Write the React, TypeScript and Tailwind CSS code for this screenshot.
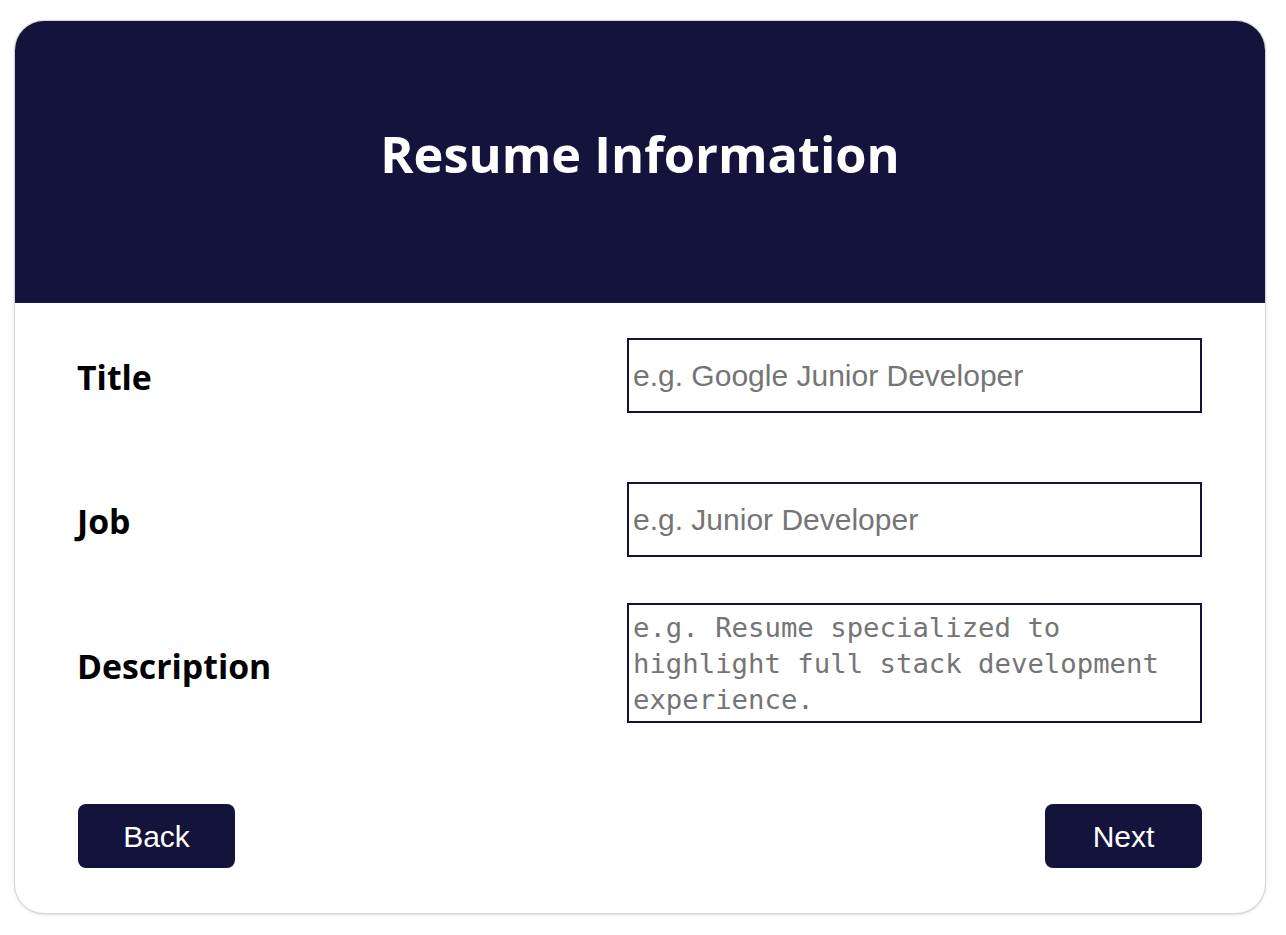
import React, { useState } from "react";

const ResumeInfo = () => {
  const [title, setTitle] = useState<string>("");
  const [job, setJob] = useState<string>("");
  const [description, setDescription] = useState<string>("");

  return (
    <div className="w-full min-h-[935px] bg-white pt-[20px] pl-[14px]">
      <div className="w-[1252px] h-[894px] rounded-[30px] overflow-hidden border border-gray-300 shadow-sm bg-white flex flex-col">
        {/* header */}
        <div className="h-[282px] shrink-0 bg-[#14133b] flex items-center justify-center pb-[16px]">
          <h1 className="text-white font-bold text-[50.5px] font-['Open_Sans',sans-serif]">
            Resume Information
          </h1>
        </div>

        <div className="flex-1 px-[63px] pt-[35px] flex flex-col">
          <div className="flex items-center justify-between h-[75px]">
            <label className="text-[33.8px] font-bold text-black font-['Open_Sans',sans-serif] pt-[4px] -ml-[1px]">
              Title
            </label>
            <input
              type="text"
              value={title}
              onChange={(e) => setTitle(e.target.value)}
              placeholder="e.g. Google Junior Developer"
              className="w-[575px] h-[75px] border-2 border-[#14133b] px-[4px] text-[30px] font-['Liberation_Sans',Arial,sans-serif] placeholder:text-[#757575] outline-none"
            />
          </div>

          <div className="flex items-center justify-between h-[75px] mt-[69px]">
            <label className="text-[33.8px] font-bold text-black font-['Open_Sans',sans-serif] pt-[4px] -ml-[1px]">
              Job
            </label>
            <input
              type="text"
              value={job}
              onChange={(e) => setJob(e.target.value)}
              placeholder="e.g. Junior Developer"
              className="w-[575px] h-[75px] border-2 border-[#14133b] px-[4px] text-[30px] font-['Liberation_Sans',Arial,sans-serif] placeholder:text-[#757575] outline-none"
            />
          </div>

          <div className="flex items-center justify-between h-[120px] mt-[46px]">
            <label className="text-[33.8px] font-bold text-black font-['Open_Sans',sans-serif] pt-[6px] -ml-[1px]">
              Description
            </label>
            <textarea
              value={description}
              onChange={(e) => setDescription(e.target.value)}
              placeholder="e.g. Resume specialized to highlight full stack development experience."
              className="w-[575px] h-[120px] border-2 border-[#14133b] px-[4px] pt-[5px] text-[27.3px] leading-[36px] font-['DejaVu_Sans_Mono',monospace] placeholder:text-[#757575] outline-none resize-none overflow-hidden"
            />
          </div>

          <div className="flex items-center justify-between mt-[81px]">
            <button className="w-[157px] h-[64px] rounded-[8px] bg-[#14133b] text-white text-[30px] font-['Liberation_Sans',Arial,sans-serif]">
              Back
            </button>
            <button className="w-[157px] h-[64px] rounded-[8px] bg-[#14133b] text-white text-[30px] font-['Liberation_Sans',Arial,sans-serif]">
              Next
            </button>
          </div>
        </div>
      </div>
    </div>
  );
};

export default function App() {
  return <ResumeInfo />;
}
